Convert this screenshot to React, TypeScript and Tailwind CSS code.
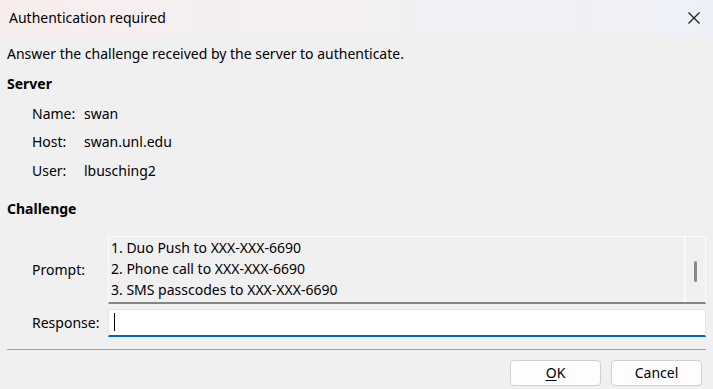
const serverInfo = [
  { label: "Name:", value: "swan" },
  { label: "Host:", value: "swan.unl.edu" },
  { label: "User:", value: "lbusching2" },
];

const promptLines = [
  "1. Duo Push to XXX-XXX-6690",
  "2. Phone call to XXX-XXX-6690",
  "3. SMS passcodes to XXX-XXX-6690",
];

function CloseIcon() {
  return (
    <svg width="12" height="12" viewBox="0 0 12 12" fill="none">
      <path d="M0.5 0.5L11.5 11.5M11.5 0.5L0.5 11.5" stroke="#1a1a1a" strokeWidth="1.2" />
    </svg>
  );
}

export default function App() {
  return (
    <div
      className="flex h-[389px] w-[713px] flex-col overflow-hidden bg-[#f0f0f0] text-[14px] text-black"
      style={{ fontFamily: '"Segoe UI", "Noto Sans", sans-serif' }}
    >
      {/* title bar */}
      <div className="flex h-[36px] shrink-0 items-center justify-between bg-gradient-to-r from-[#f8eded] via-[#f3eff2] to-[#edf1f7] pl-[9px] pr-[13px]">
        <span className="text-[14px] leading-none">Authentication required</span>
        <CloseIcon />
      </div>

      <div className="flex flex-col px-[7px]">
        <p className="mt-[8px] h-[20px] leading-[20px]">
          Answer the challenge received by the server to authenticate.
        </p>

        <h2 className="mt-[10px] h-[20px] font-bold leading-[20px]">Server</h2>
        <div className="mt-[5px] flex flex-col pl-[25px]">
          {serverInfo.map((r) => (
            <div key={r.label} className="flex h-[28.5px] items-center">
              <span className="w-[52px]">{r.label}</span>
              <span>{r.value}</span>
            </div>
          ))}
        </div>

        <h2 className="mt-[14px] h-[20px] font-bold leading-[20px]">Challenge</h2>

        <div className="mt-[17px] flex items-center pl-[25px]">
          <span className="w-[76px]">Prompt:</span>
          <div className="flex h-[68px] flex-1 border-x border-t border-b-2 border-x-[#fbfbfb] border-t-[#fbfbfb] border-b-[#858585] bg-[#f0f0f0]">
            <div className="flex flex-1 flex-col pl-[2px] leading-[21px]">
              {promptLines.map((l) => (
                <span key={l}>{l}</span>
              ))}
            </div>
            <div className="flex w-[21px] items-center justify-center border-l-2 border-[#fbfbfb]">
              <div className="mt-[4px] h-[21px] w-[3px] rounded-sm bg-[#8a8a8a]" />
            </div>
          </div>
        </div>

        <div className="mt-[5px] flex items-center pl-[25px]">
          <span className="w-[76px]">Response:</span>
          <div className="flex h-[28px] flex-1 items-center border border-b-2 border-[#e5e5e5] border-b-[#0067c0] bg-white pl-[5px]">
            <div className="h-[18px] w-px bg-black" />
          </div>
        </div>

        <div className="mt-[12px] h-px bg-[#a0a0a0]" />

        <div className="mt-[10px] flex justify-end gap-[10px] pr-[4px]">
          <button className="h-[26px] w-[91px] rounded-[4px] border border-[#d0d0d0] bg-[#fdfdfd] leading-none">
            <span className="underline underline-offset-2">O</span>K
          </button>
          <button className="h-[26px] w-[91px] rounded-[4px] border border-[#d0d0d0] bg-[#fdfdfd] leading-none">
            Cancel
          </button>
        </div>
      </div>
    </div>
  );
}
